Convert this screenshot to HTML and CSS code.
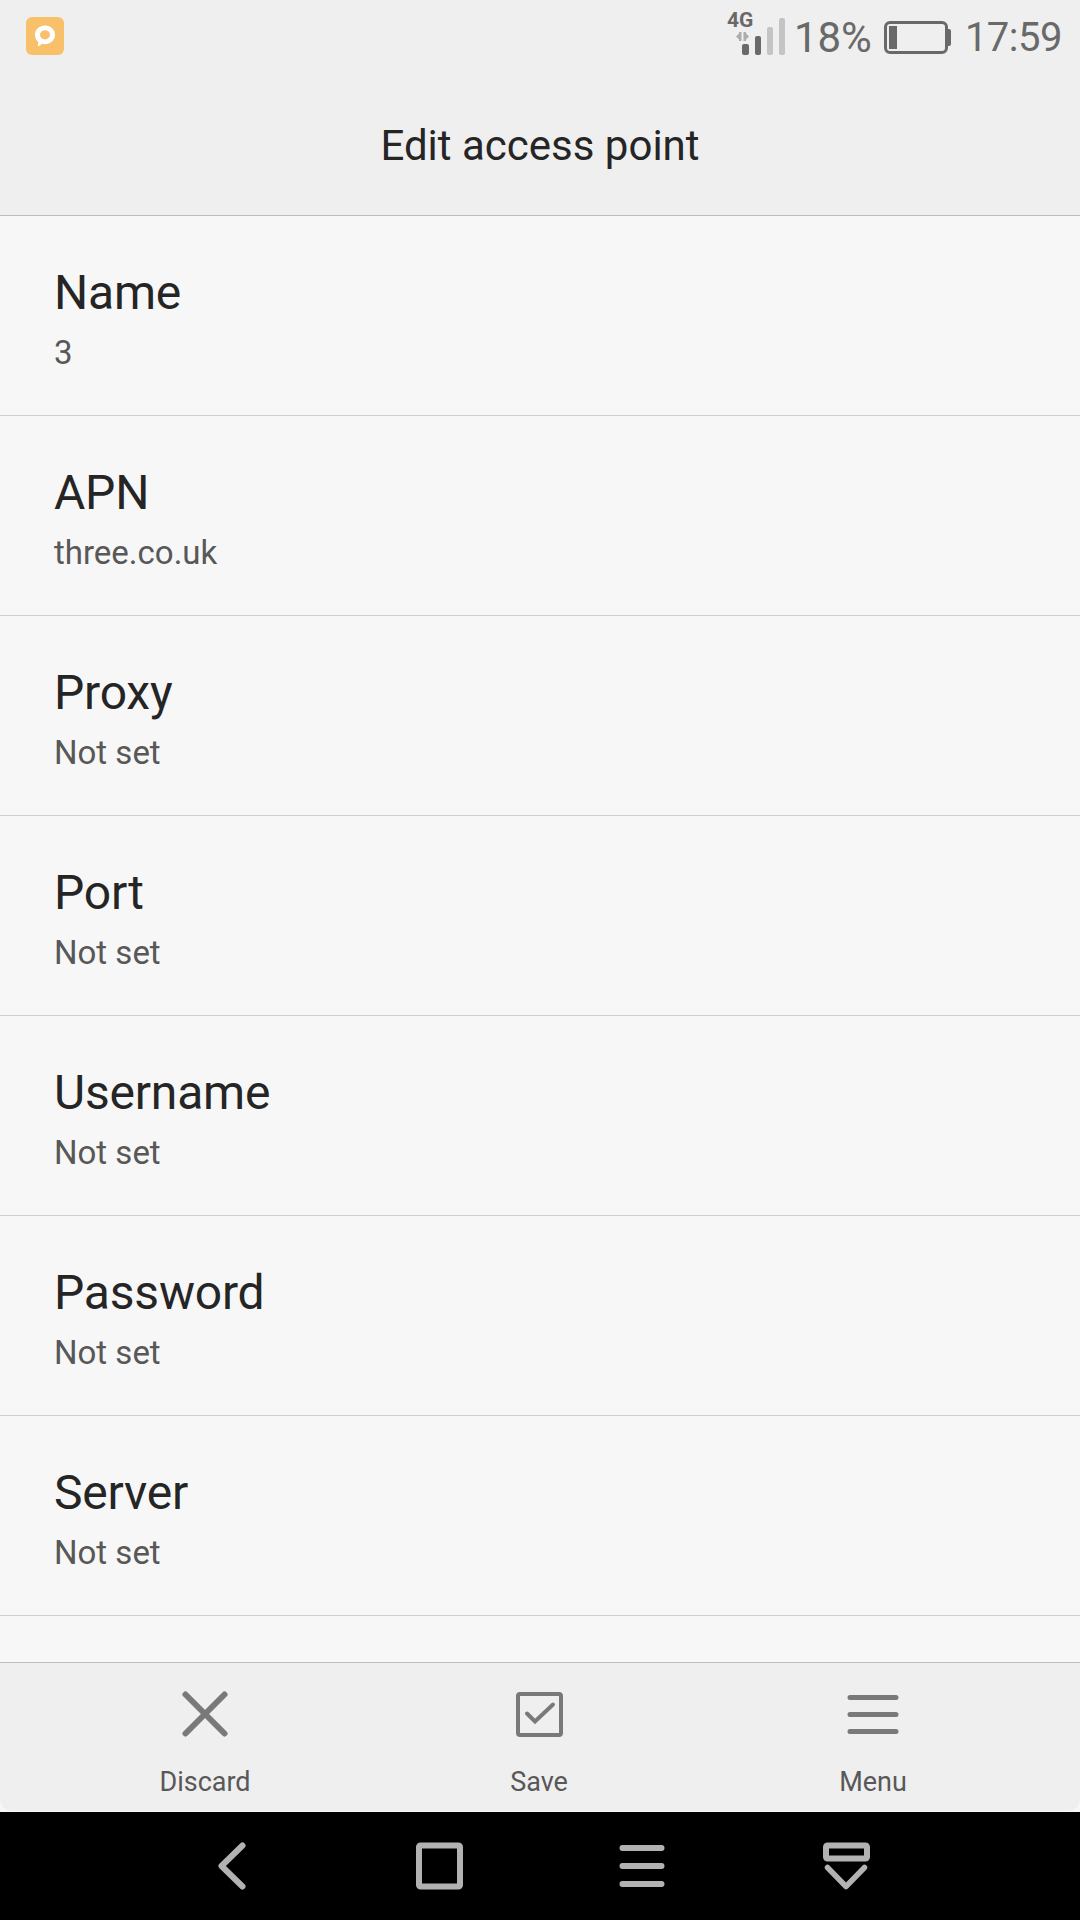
FILE: index.html
```html
<!DOCTYPE html>
<html lang="en">
<head>
  <meta charset="UTF-8">
  <title>Edit access point</title>
  <link rel="stylesheet" href="styles.css">
</head>
<body>

<!-- Status bar -->
<div class="status-bar">
  <svg class="app-icon" width="38" height="38" viewBox="0 0 38 38">
    <rect width="38" height="38" rx="6" fill="#f8c06a"/>
    <path d="M19 8.500c5.700 0 10 4 10 9.300s-4.300 9.400-10 9.400c-1 0-2-.1-2.900-.4L13.200 29h-1.400l.5-3.900C10.200 23.400 9 20.800 9 17.800c0-5.300 4.300-9.300 10-9.300z" fill="#fff"/>
    <ellipse cx="19" cy="17.800" rx="5" ry="4.600" fill="#f8c06a"/>
  </svg>
  <div class="status-right">
    <div class="signal">
      <span class="network">4G</span>
      <svg width="50" height="44" viewBox="0 0 50 44">
        <path d="M5.500 14v9h-2.500v-1.500L0 18.500l3-3v-1.500zM7.500 14v9h2.500v-1.500l3-3-3-3v-1.500z" fill="#adadad"/>
        <rect x="6" y="26" width="7" height="11" rx="2" fill="#696969"/>
        <rect x="19" y="18" width="6" height="19" rx="2" fill="#696969"/>
        <rect x="31" y="9" width="6" height="28" rx="2" fill="#c4c4c4"/>
        <rect x="43" y="0" width="6" height="37" rx="2" fill="#c4c4c4"/>
      </svg>
    </div>
    <span class="percent">18%</span>
    <svg class="battery" width="67" height="34" viewBox="0 0 67 34">
      <rect x="1.500" y="1.500" width="61" height="30" rx="4.500" fill="none" stroke="#696969" stroke-width="3"/>
      <rect x="5" y="5" width="8" height="23" fill="#696969"/>
      <path d="M63 8h2q2 0 2 2v13q0 2-2 2h-2z" fill="#696969"/>
    </svg>
    <span class="clock">17:59</span>
  </div>
</div>

<header>
  <h1>Edit access point</h1>
</header>

<!-- Settings list -->
<main class="settings">
  <div class="row"><h2>Name</h2><p>3</p></div>
  <div class="row"><h2>APN</h2><p>three.co.uk</p></div>
  <div class="row"><h2>Proxy</h2><p>Not set</p></div>
  <div class="row"><h2>Port</h2><p>Not set</p></div>
  <div class="row"><h2>Username</h2><p>Not set</p></div>
  <div class="row"><h2>Password</h2><p>Not set</p></div>
  <div class="row"><h2>Server</h2><p>Not set</p></div>
</main>

<!-- Actions -->
<div class="toolbar-wrap">
  <div class="toolbar">
    <button class="action">
      <svg width="72" height="72" viewBox="0 0 72 72" fill="none" stroke="#797979" stroke-width="6" stroke-linecap="round">
        <path d="M16.500 16.500l39 39M55.500 16.500l-39 39"/>
      </svg>
      <span>Discard</span>
    </button>
    <button class="action">
      <svg width="72" height="72" viewBox="0 0 72 72" fill="none" stroke="#797979" stroke-width="4">
        <rect x="15" y="16" width="43" height="41" rx="2"/>
        <path d="M24 35.500l8 8L50 26.500" stroke-linecap="round"/>
      </svg>
      <span>Save</span>
    </button>
    <button class="action">
      <svg width="72" height="72" viewBox="0 0 72 72" fill="none" stroke="#797979" stroke-width="5" stroke-linecap="round">
        <path d="M13 19.500h46M13 36.500h46M13 53.500h46"/>
      </svg>
      <span>Menu</span>
    </button>
  </div>
</div>

<!-- System navigation -->
<nav class="nav-bar">
  <svg width="60" height="60" viewBox="0 0 60 60">
    <path d="M37.500 9.500L16.500 30l21 20.500"/>
  </svg>
  <svg width="60" height="60" viewBox="0 0 60 60">
    <rect x="10" y="9.500" width="41" height="41" rx="1.500"/>
  </svg>
  <svg width="60" height="60" viewBox="0 0 60 60">
    <path d="M9.500 12h39M9.500 30h39M9.500 48h39"/>
  </svg>
  <svg width="60" height="60" viewBox="0 0 60 60">
    <rect x="9" y="9.500" width="41" height="13" rx="1.500"/>
    <path d="M10.500 31.500L29 50.500L47.500 31.500" stroke-width="5.500"/>
  </svg>
</nav>

</body>
</html>
```
FILE: styles.css
```css
:root {
  --bar: #efefef;
  --page: #f7f7f7;
  --line: #bdbdbd;
  --text: #252525;
  --muted: #585858;
  --status: #696969;
}
* {
  box-sizing: border-box;
  margin: 0;
  padding: 0;
}
body {
  font-family: Roboto, sans-serif;
  background: var(--page);
  color: var(--text);
  width: 1080px;
  height: 1920px;
  display: flex;
  flex-direction: column;
  overflow: hidden;
}

.status-bar {
  height: 75px;
  background: var(--bar);
  color: var(--status);
  display: flex;
  justify-content: space-between;
  align-items: flex-start;
  padding: 0 18px 0 26px;
}
.app-icon {
  margin-top: 17px;
}
.status-right {
  display: flex;
  align-items: flex-start;
}
.signal {
  display: grid;
  width: 59px;
  margin-right: 8px;
}
.signal > * {
  grid-area: 1 / 1;
}
.signal svg {
  margin: 18px 0 0 9px;
}
.network {
  font-size: 21px;
  font-weight: 700;
  line-height: 24px;
  margin-top: 8px;
}
.percent {
  font-size: 42px;
  line-height: 48px;
  margin-top: 14px;
}
.battery {
  margin: 21px 14px 0 12px;
}
.clock {
  font-size: 40px;
  line-height: 48px;
  letter-spacing: -0.5px;
  margin-top: 14px;
}

header {
  height: 141px;
  background: var(--bar);
  border-bottom: 1px solid var(--line);
  text-align: center;
  padding-top: 47px;
}
h1 {
  font-size: 42px;
  font-weight: 400;
  line-height: 48px;
}

.settings {
  flex: 1;
}
.row {
  height: 200px;
  border-bottom: 1px solid #cfcfcf;
  padding: 49px 54px 0;
}
.row h2 {
  font-size: 48px;
  font-weight: 400;
  line-height: 56px;
  letter-spacing: -0.2px;
}
.row p {
  font-size: 33px;
  line-height: 40px;
  margin-top: 12px;
  color: var(--muted);
}

.toolbar-wrap {
  height: 150px;
  background: var(--page);
  border-top: 1px solid var(--line);
}
.toolbar {
  height: 148px;
  background: var(--bar);
  border-radius: 0 0 12px 12px;
  display: flex;
  justify-content: center;
  gap: 134px;
  padding-right: 2px;
}
.action {
  width: 200px;
  border: none;
  background: none;
  font-family: inherit;
  color: var(--muted);
  display: flex;
  flex-direction: column;
  align-items: center;
  padding-top: 15px;
}
.action span {
  font-size: 27px;
  line-height: 32px;
  margin-top: 16px;
}

.nav-bar {
  height: 108px;
  background: #000;
  display: flex;
  gap: 144px;
  padding: 24px 0 0 205px;
}
.nav-bar svg {
  fill: none;
  stroke: #b2b2b2;
  stroke-width: 6;
  stroke-linecap: round;
  stroke-linejoin: round;
}
```
